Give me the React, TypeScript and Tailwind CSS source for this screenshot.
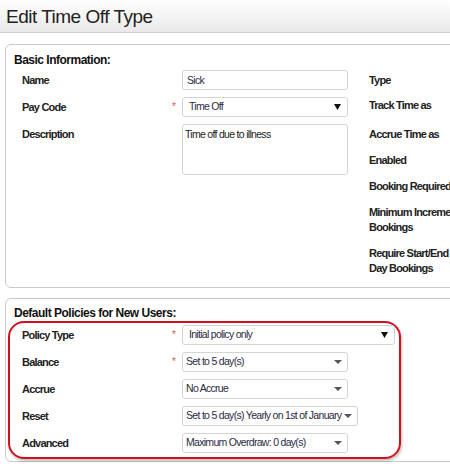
import React from 'react'

const font = { fontFamily: '"Liberation Sans", Arial, sans-serif' }

function Caret({ solid }: { solid?: boolean }) {
  // native-looking black triangle vs. bootstrap style caret
  return solid ? (
    <svg width="7" height="6" viewBox="0 0 7 6" className="shrink-0">
      <path d="M0 0h7L3.5 6z" fill="#111" />
    </svg>
  ) : (
    <svg width="8" height="4" viewBox="0 0 8 4" className="shrink-0 ml-[2px]">
      <path d="M0 0h8L4 4z" fill="#555" />
    </svg>
  )
}

function Select({ value, width, solid }: { value: string; width: string; solid?: boolean }) {
  return (
    <div
      className={`${width} h-[20px] flex items-center justify-between bg-white border border-[#d4d4d4] rounded-[3px] pl-[3px] ${solid ? 'pr-[6px]' : 'pr-[5px]'} text-[10.5px] tracking-[-0.7px] text-[#2b2b3f] whitespace-nowrap overflow-hidden`}
    >
      <span className={solid ? 'pl-[3px]' : ''}>{value}</span>
      <Caret solid={solid} />
    </div>
  )
}

function Row({ label, required, children, tall }: { label: string; required?: boolean; children: React.ReactNode; tall?: boolean }) {
  return (
    <div className={`flex items-start ${tall ? 'h-[51px]' : 'h-[20px]'}`}>
      <div className="w-[166px] shrink-0 pl-[16px] leading-[20px] text-[11px] tracking-[-0.8px] font-bold text-[#222]">{label}</div>
      <div className="w-[10px] shrink-0 leading-[20px] text-[10px] text-[#d9534f]">{required ? '*' : ''}</div>
      {children}
    </div>
  )
}

const rightLabels: { lines: string[]; mt: string }[] = [
  { lines: ['Type'], mt: 'mt-[28px]' },
  { lines: ['Track Time as'], mt: 'mt-[10px]' },
  { lines: ['Accrue Time as'], mt: 'mt-[14px]' },
  { lines: ['Enabled'], mt: 'mt-[11px]' },
  { lines: ['Booking Required'], mt: 'mt-[11px]' },
  { lines: ['Minimum Increment for', 'Bookings'], mt: 'mt-[11px]' },
  { lines: ['Require Start/End Time for Full', 'Day Bookings'], mt: 'mt-[11px]' },
]

export default function App() {
  return (
    <div className="w-[450px] h-[467px] overflow-hidden bg-white" style={font}>
      {/* page title */}
      <div className="h-[33px] bg-gradient-to-b from-white to-[#e9e9e9] border-b border-[#cfcfcf] flex items-center pl-[6px]">
        <h1 className="text-[19px] tracking-[-0.5px] text-[#222] leading-none">Edit Time Off Type</h1>
      </div>

      {/* Basic information */}
      <div className="ml-[5px] mt-[11px] w-[480px] h-[244px] border border-[#c9c9c9] rounded-[6px] flex">
        <div className="w-[355px] shrink-0">
          <div className="pl-[8px] pt-[8px] text-[12px] tracking-[-0.5px] font-bold text-[#111] leading-[15px]">Basic Information:</div>
          <div className="mt-[2px] flex flex-col gap-[7px]">
            <Row label="Name">
              <div className="w-[166px] h-[20px] bg-white border border-[#d4d4d4] rounded-[3px] pl-[4px] text-[10.5px] tracking-[-0.7px] leading-[18px] text-[#2b2b3f]">Sick</div>
            </Row>
            <Row label="Pay Code" required>
              <Select value="Time Off" width="w-[166px]" solid />
            </Row>
            <Row label="Description" tall>
              <div className="w-[166px] h-[51px] bg-white border border-[#d4d4d4] rounded-[3px] pl-[2px] pt-[3px] text-[10.5px] tracking-[-0.7px] leading-[13px] text-[#222]">
                Time off due to illness
              </div>
            </Row>
          </div>
        </div>
        <div className="pl-[8px] flex flex-col">
          {rightLabels.map(l => (
            <div key={l.lines[0]} className={`${l.mt} text-[11px] tracking-[-0.8px] font-bold text-[#222] leading-[15px] whitespace-nowrap`}>
              {l.lines.map(t => (
                <div key={t}>{t}</div>
              ))}
            </div>
          ))}
        </div>
      </div>

      {/* Default policies */}
      <div className="ml-[5px] mt-[10px] w-[480px] h-[164px] border border-[#c9c9c9] rounded-[6px]">
        <div className="pl-[8px] pt-[7px] text-[12px] tracking-[-0.5px] font-bold text-[#111] leading-[15px]">Default Policies for New Users:</div>
        <div className="ml-[2px] w-[393px] border-2 border-[#d0101c] rounded-[16px] pt-[2px] pb-[4px] flex flex-col gap-[7px] shadow-[1px_2px_3px_rgba(0,0,0,0.25)]">
          <div className="-ml-[4px]">
            <Row label="Policy Type" required>
              <Select value="Initial policy only" width="w-[213px]" solid />
            </Row>
          </div>
          <div className="-ml-[4px]">
            <Row label="Balance" required>
              <Select value="Set to 5 day(s)" width="w-[166px]" />
            </Row>
          </div>
          <div className="-ml-[4px]">
            <Row label="Accrue">
              <Select value="No Accrue" width="w-[166px]" />
            </Row>
          </div>
          <div className="-ml-[4px]">
            <Row label="Reset">
              <Select value="Set to 5 day(s) Yearly on 1st of January" width="w-[176px]" />
            </Row>
          </div>
          <div className="-ml-[4px]">
            <Row label="Advanced">
              <Select value="Maximum Overdraw: 0 day(s)" width="w-[166px]" />
            </Row>
          </div>
        </div>
      </div>
    </div>
  )
}
